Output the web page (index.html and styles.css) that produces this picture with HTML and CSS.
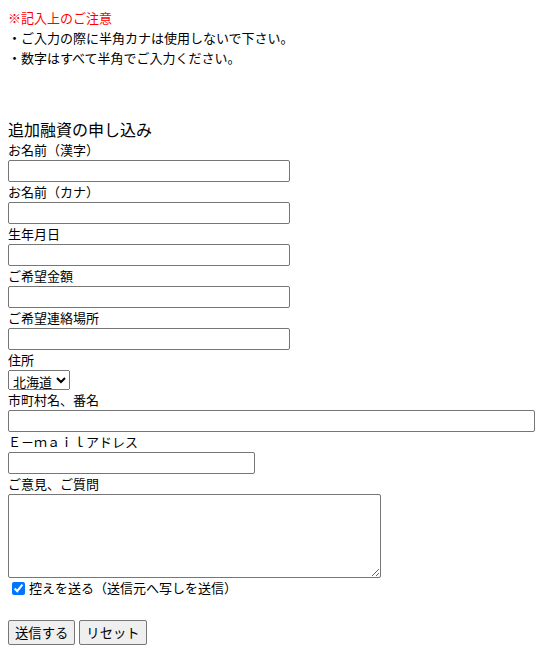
FILE: index.html
```html
<!DOCTYPE html>
<html lang="ja">
<head>
    <meta charset="UTF-8">
    <meta name="viewport" content="width=device-width, initial-scale=1.0">
    <title>追加融資の申し込み</title>
    <link rel="stylesheet" href="styles.css">
</head>
<body>

<div class="notice">
    <p class="notice-title">※記入上のご注意</p>
    <p>・ご入力の際に半角カナは使用しないで下さい。</p>
    <p>・数字はすべて半角でご入力ください。</p>
</div>

<form class="apply" onsubmit="return false;">
    <h1>追加融資の申し込み</h1>

    <!-- 入力項目 -->
    <label for="nameKanji">お名前（漢字）</label>
    <input type="text" id="nameKanji" class="mid">

    <label for="nameKana">お名前（カナ）</label>
    <input type="text" id="nameKana" class="mid">

    <label for="birth">生年月日</label>
    <input type="text" id="birth" class="mid">

    <label for="amount">ご希望金額</label>
    <input type="text" id="amount" class="mid">

    <label for="contact">ご希望連絡場所</label>
    <input type="text" id="contact" class="mid">

    <label for="pref">住所</label>
    <div class="row">
        <select id="pref">
            <option>北海道</option>
            <option>青森県</option>
            <option>岩手県</option>
        </select>
    </div>

    <label for="city">市町村名、番名</label>
    <input type="text" id="city" class="wide">

    <label for="email">Ｅ－ｍａｉｌアドレス</label>
    <input type="text" id="email" class="short">

    <label for="comment">ご意見、ご質問</label>
    <textarea id="comment"></textarea>

    <div class="copy">
        <input type="checkbox" id="sendCopy" checked>
        <label for="sendCopy">控えを送る（送信元へ写しを送信）</label>
    </div>

    <!-- 送信ボタン -->
    <div class="buttons">
        <button type="submit">送信する</button>
        <button type="reset">リセット</button>
    </div>
</form>

</body>
</html>
```

FILE: styles.css
```css
body {
    margin: 8px;
    color: #000;
    font-family: "Noto Sans CJK JP", "Noto Sans", sans-serif;
    font-size: 13px;
    line-height: 20px;
    background: #fff;
}

.notice p {
    margin: 0;
}
.notice-title {
    color: #f00;
}

.apply {
    margin-top: 50px;
}

h1 {
    margin: 0;
    font-size: 16px;
    font-weight: normal;
    line-height: 22px;
}

label {
    display: block;
}

input[type="text"],
textarea {
    display: block;
    box-sizing: border-box;
    height: 22px;
    margin: 0;
    padding: 1px 2px;
    border: 1px solid #767676;
    border-radius: 2px;
    font-family: inherit;
    font-size: 13px;
}

.mid {
    width: 282px;
}
.wide {
    width: 527px;
}
.short {
    width: 247px;
}

.row {
    height: 20px;
}
select {
    box-sizing: border-box;
    height: 20px;
    margin: 0;
    font-family: inherit;
    font-size: 13px;
}

textarea {
    width: 373px;
    height: 84px;
    resize: both;
}

.copy {
    display: flex;
    align-items: center;
    height: 20px;
    padding-left: 4px;
}
.copy input {
    margin: 0 4px 0 0;
    width: 13px;
    height: 13px;
}
.copy label {
    display: inline;
}

.buttons {
    margin-top: 22px;
    display: flex;
    gap: 4px;
}
button {
    height: 25px;
    padding: 1px 6px;
    font-family: inherit;
    font-size: 13.333px;
    border: 1px solid #767676;
    border-radius: 2px;
    background: #efefef;
}
```
